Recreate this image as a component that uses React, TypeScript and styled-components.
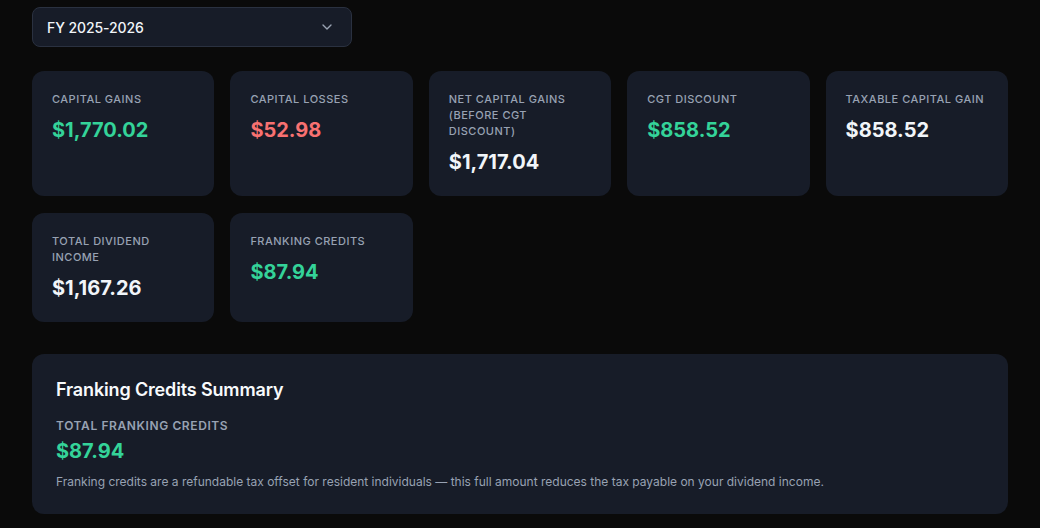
import React from "react";
import styled, { createGlobalStyle } from "styled-components";

const Global = createGlobalStyle`
  html, body { margin: 0; padding: 0; background: #0a0a0a; }
  body { font-family: Inter, "Noto Sans", sans-serif; color: #f1f5f9; }
  * { box-sizing: border-box; }
`;

const Page = styled.div`
  padding: 7px 32px 16px;
  display: flex;
  flex-direction: column;
`;

const Select = styled.div`
  width: 320px;
  height: 40px;
  display: flex;
  align-items: center;
  justify-content: space-between;
  padding: 0 16px 0 14px;
  background: #171c28;
  border: 1px solid #2a3140;
  border-radius: 8px;
  font-size: 14px;
  font-weight: 500;
  letter-spacing: -0.1px;
  color: #f1f5f9;
`;

const Grid = styled.div`
  margin-top: 24px;
  display: grid;
  grid-template-columns: repeat(5, 1fr);
  gap: 17px 16px;
`;

const Card = styled.div`
  background: #171c28;
  border-radius: 12px;
  padding: 20px;
  display: flex;
  flex-direction: column;
  gap: 9px;
`;

const Label = styled.div`
  font-size: 11px;
  line-height: 16px;
  font-weight: 500;
  letter-spacing: 0.5px;
  text-transform: uppercase;
  color: #98a2b3;
`;

type Tone = "green" | "red" | "white";
const toneColor: Record<Tone, string> = {
  green: "#34d399",
  red: "#f87171",
  white: "#f1f5f9",
};

const Value = styled.div<{ $tone: Tone }>`
  font-size: 20px;
  line-height: 28px;
  font-weight: 700;
  color: ${(p) => toneColor[p.$tone]};
`;

const Panel = styled.section`
  margin-top: 32px;
  background: #171c28;
  border-radius: 12px;
  padding: 22px 24px 24px;
`;

const PanelTitle = styled.h2`
  margin: 0;
  font-size: 18px;
  line-height: 28px;
  font-weight: 600;
  letter-spacing: -0.15px;
  color: #f8fafc;
`;

const PanelLabel = styled.div`
  margin-top: 14px;
  font-size: 12px;
  line-height: 16px;
  font-weight: 600;
  letter-spacing: 0.6px;
  text-transform: uppercase;
  color: #98a2b3;
`;

const PanelValue = styled(Value)`
  margin-top: 3px;
`;

const PanelNote = styled.p`
  margin: 9px 0 0;
  font-size: 12px;
  line-height: 16px;
  color: #98a2b3;
`;

const cards: { label: string; value: string; tone: Tone }[] = [
  { label: "Capital Gains", value: "$1,770.02", tone: "green" },
  { label: "Capital Losses", value: "$52.98", tone: "red" },
  { label: "Net Capital Gains (Before CGT Discount)", value: "$1,717.04", tone: "white" },
  { label: "CGT Discount", value: "$858.52", tone: "green" },
  { label: "Taxable Capital Gain", value: "$858.52", tone: "white" },
  { label: "Total Dividend Income", value: "$1,167.26", tone: "white" },
  { label: "Franking Credits", value: "$87.94", tone: "green" },
];

const Chevron = () => (
  <svg width="16" height="16" viewBox="0 0 24 24" fill="none" stroke="#9aa3b2" strokeWidth="2" strokeLinecap="round" strokeLinejoin="round">
    <path d="m6 9 6 6 6-6" />
  </svg>
);

export default function App() {
  return (
    <>
      <Global />
      <Page>
        <Select>
          <span>FY 2025-2026</span>
          <Chevron />
        </Select>
        <Grid>
          {cards.map((c) => (
            <Card key={c.label}>
              <Label>{c.label}</Label>
              <Value $tone={c.tone}>{c.value}</Value>
            </Card>
          ))}
        </Grid>
        <Panel>
          <PanelTitle>Franking Credits Summary</PanelTitle>
          <PanelLabel>Total Franking Credits</PanelLabel>
          <PanelValue $tone="green">$87.94</PanelValue>
          <PanelNote>
            Franking credits are a refundable tax offset for resident individuals — this full amount reduces the tax payable on your dividend income.
          </PanelNote>
        </Panel>
      </Page>
    </>
  );
}
